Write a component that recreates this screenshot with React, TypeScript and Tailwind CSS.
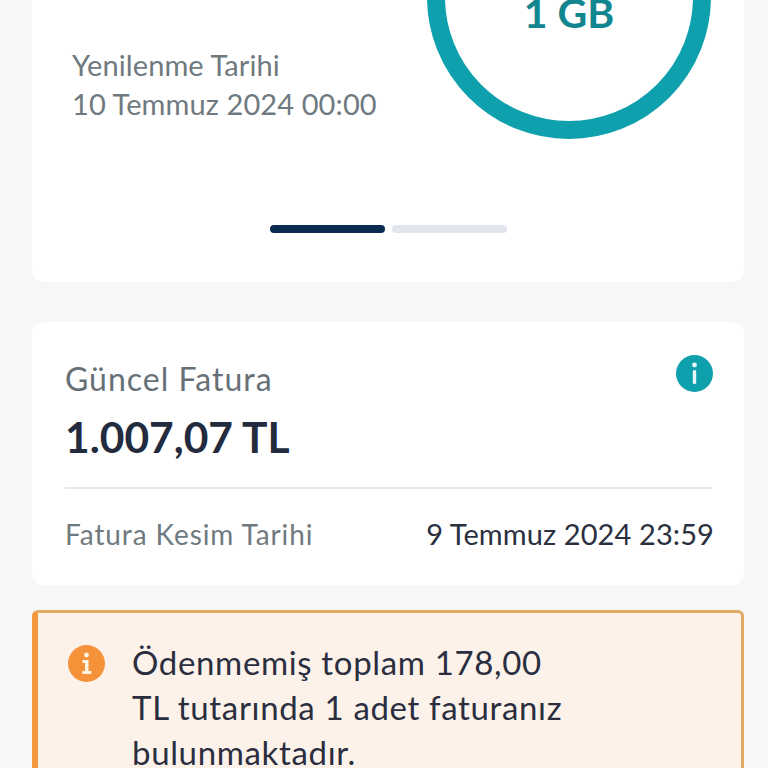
export default function App() {
  const font = { fontFamily: '"Lato","Noto Sans",sans-serif' };
  return (
    <div style={font} className="h-[768px] w-[768px] overflow-hidden bg-[#f5f7f9] pl-8 pr-6">
      <section className="flex h-[282px] flex-col rounded-b-xl bg-white">
        <div className="flex h-[225px] items-start justify-between">
          <div className="pl-10 pt-[45px] text-[29px] leading-[39px] tracking-[0.1px] text-[#6f7a80]">
            <div>Yenilenme Tarihi</div>
            <div>10 Temmuz 2024 00:00</div>
          </div>
          <div className="mr-[33px] -mt-[145px] flex h-[284px] w-[284px] shrink-0 items-center justify-center rounded-full border-[18px] border-[#0ea1ad]">
            <span className="mt-[32px] text-[41px] font-bold text-[#12868f]">1 GB</span>
          </div>
        </div>
        <div className="flex justify-center gap-[7px]">
          <div className="h-2 w-[115px] rounded-sm bg-[#0a2a52]" />
          <div className="h-2 w-[115px] rounded-sm bg-[#e1e5ee]" />
        </div>
      </section>

      <section className="mt-10 h-[263px] rounded-xl bg-white pl-[33px] pr-[32px]">
        <div className="flex items-start justify-between pt-[37px]">
          <div className="text-[32px] leading-10 tracking-[1px] text-[#667077]">Güncel Fatura</div>
          <svg width="37" height="37" viewBox="0 0 37 37" className="-mr-px mt-[-4px]">
            <circle cx="18.5" cy="18.5" r="18.5" fill="#0ea1ad" />
            <circle cx="18.5" cy="10" r="2.4" fill="#e8f8fa" />
            <rect x="16.8" y="15" width="3.4" height="14" rx="1.5" fill="#e8f8fa" />
          </svg>
        </div>
        <div className="mt-[13px] text-[42.5px] font-bold leading-[50px] text-[#232b3e]">1.007,07 TL</div>
        <div className="mt-[25px] h-0.5 bg-[#e5e9ea]" />
        <div className="mt-[25px] flex items-center justify-between text-[29px] leading-[40px]">
          <span className="text-[28px] tracking-[0.9px] text-[#6f7a80]">Fatura Kesim Tarihi</span>
          <span className="-mr-[2px] tracking-[0.1px] text-[#2a3040]">9 Temmuz 2024 23:59</span>
        </div>
      </section>

      <section className="mt-[25px] flex h-[220px] items-start gap-[27px] rounded-t-md border-t-[3px] border-r-[3px] border-l-[6px] border-t-[#e0aa63] border-r-[#e0aa63] border-l-[#f4983e] bg-[#fdf2ea] pl-[30px] pt-[27px]">
        <svg width="37" height="37" viewBox="0 0 37 37" className="mt-[5px] shrink-0">
          <circle cx="18.5" cy="18.5" r="18.5" fill="#f6923a" />
          <circle cx="18.5" cy="10" r="2.4" fill="#fff3e4" />
          <path d="M14.5 15h6v11h2.8v3h-9v-3h2.7v-8h-2.5z" fill="#fff3e4" />
        </svg>
        <div className="text-[33px] leading-[45px] tracking-[0.65px] text-[#2a2e3f]">
          <div>Ödenmemiş toplam 178,00</div>
          <div>TL tutarında 1 adet faturanız</div>
          <div>bulunmaktadır.</div>
        </div>
      </section>
    </div>
  );
}
